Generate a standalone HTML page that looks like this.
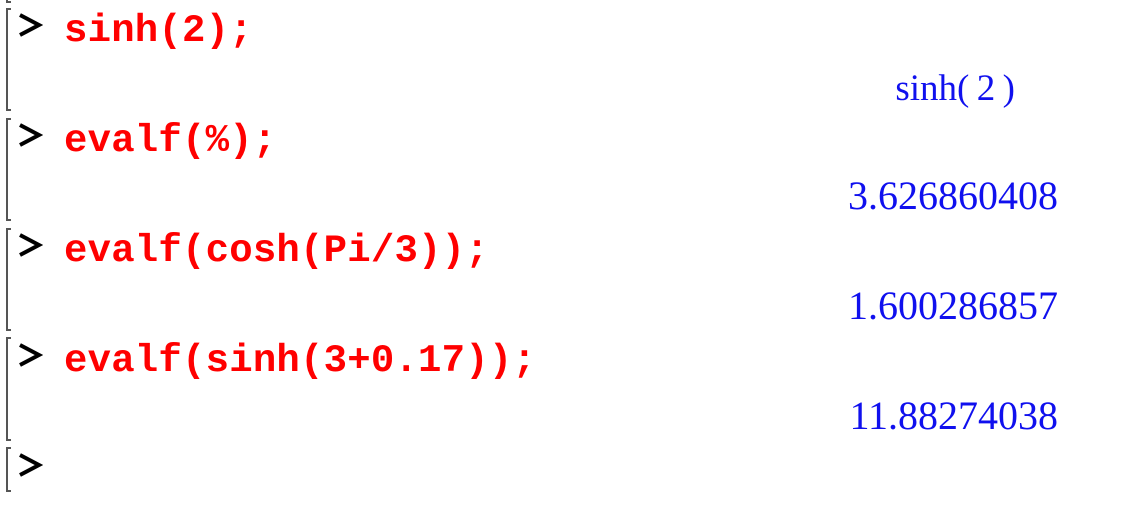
<!DOCTYPE html>
<html><head><style>
body{margin:0;width:1142px;height:513px;background:#fff;position:relative;overflow:hidden}
.br{position:absolute;left:6px;width:5px;border-left:2px solid #555;border-top:2px solid #555;border-bottom:2px solid #555;box-sizing:border-box}
.in{position:absolute;left:64px;font:bold 39px "Liberation Mono",monospace;letter-spacing:0.2px;color:#f00;white-space:pre;line-height:1}
.out{position:absolute;right:84px;font:40px "Liberation Serif",serif;color:#1010ee;white-space:pre;line-height:1}
svg.p{position:absolute;left:17px;width:26px;height:26px}
</style></head><body>
<div class="br" style="top:-2px;height:5px;border-top:none"></div>
<div class="br" style="top:8px;height:103px"></div>
<div class="br" style="top:118px;height:103px"></div>
<div class="br" style="top:228px;height:103px"></div>
<div class="br" style="top:337px;height:104px"></div>
<div class="br" style="top:447px;height:45px"></div>

<svg class="p" style="top:12px" viewBox="0 0 26 26"><polyline points="3,3 22,13 3,23" fill="none" stroke="#000" stroke-width="4"/></svg>
<svg class="p" style="top:122px" viewBox="0 0 26 26"><polyline points="3,3 22,13 3,23" fill="none" stroke="#000" stroke-width="4"/></svg>
<svg class="p" style="top:232px" viewBox="0 0 26 26"><polyline points="3,3 22,13 3,23" fill="none" stroke="#000" stroke-width="4"/></svg>
<svg class="p" style="top:342px" viewBox="0 0 26 26"><polyline points="3,3 22,13 3,23" fill="none" stroke="#000" stroke-width="4"/></svg>
<svg class="p" style="top:452px" viewBox="0 0 26 26"><polyline points="3,3 22,13 3,23" fill="none" stroke="#000" stroke-width="4"/></svg>

<div class="in" style="top:12px">sinh(2);</div>
<div class="in" style="top:122px">evalf(%);</div>
<div class="in" style="top:232px">evalf(cosh(Pi/3));</div>
<div class="in" style="top:342px">evalf(sinh(3+0.17));</div>

<div class="out" style="top:70px;font-size:37px;right:127px">sinh(&#8201;2&#8201;)</div>
<div class="out" style="top:176px">3.626860408</div>
<div class="out" style="top:286px">1.600286857</div>
<div class="out" style="top:396px">11.88274038</div>
</body></html>
